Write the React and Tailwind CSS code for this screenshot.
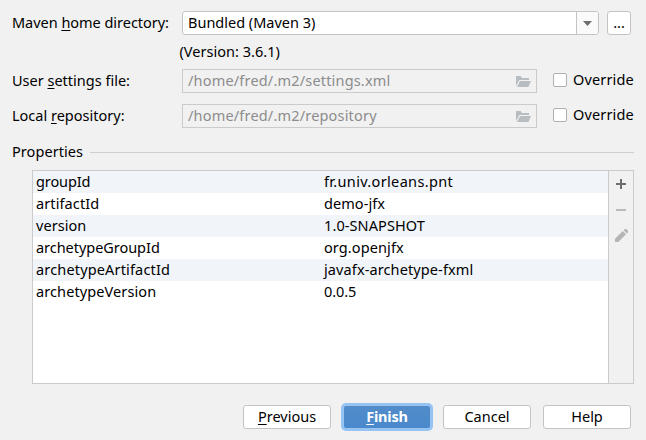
function FolderIcon() {
  return (
    <svg width="15" height="12" viewBox="0 0 15 12" fill="#b7bdc1" className="mr-[5px] shrink-0">
      <path d="M0 11V1h4.6L6 3h7v2H3.4L0 11z" />
      <path d="M4 6h11l-2.6 6H1z" />
    </svg>
  );
}

function PathField({ children }) {
  return (
    <div className="flex h-6 w-[355px] items-center justify-between border border-[#cbcbcb] pl-[5px] text-[#8c8c8c]">
      <span className="pb-px tracking-[0.18px]">{children}</span>
      <FolderIcon />
    </div>
  );
}

function Override() {
  return (
    <label className="ml-4 flex items-center pb-0.5">
      <span className="mr-[6px] h-[14px] w-[14px] rounded-[2px] border border-[#b0b0b0] bg-white" />
      <span className="pb-px tracking-[0.15px]">Override</span>
    </label>
  );
}

function Key({ children }) {
  return (
    <span className="underline decoration-1 underline-offset-2 [text-decoration-skip-ink:none]">
      {children}
    </span>
  );
}

function DialogButton({ children }) {
  return (
    <button className="flex h-6 w-[88px] items-center justify-center rounded-[3px] border border-[#c4c4c4] bg-white pb-px">
      {children}
    </button>
  );
}

const properties = [
  { name: "groupId", value: "fr.univ.orleans.pnt", nameClass: "tracking-[-0.1px]", valueClass: "tracking-[0.34px]" },
  { name: "artifactId", value: "demo-jfx", nameClass: "tracking-[0.1px]", valueClass: "tracking-[0.06px]" },
  { name: "version", value: "1.0-SNAPSHOT", nameClass: "tracking-[0.05px]", valueClass: "tracking-[0.1px]" },
  { name: "archetypeGroupId", value: "org.openjfx", nameClass: "tracking-[-0.04px]", valueClass: "tracking-[0.1px]" },
  { name: "archetypeArtifactId", value: "javafx-archetype-fxml", nameClass: "tracking-[0.16px]", valueClass: "tracking-[0.11px]" },
  { name: "archetypeVersion", value: "0.0.5", nameClass: "tracking-[0.1px]", valueClass: "tracking-[-0.1px]" },
];

export default function App() {
  return (
    <div className="flex h-[440px] w-[646px] flex-col overflow-hidden whitespace-nowrap bg-[#f1f1f1] pl-3 pt-[11px] font-['Noto_Sans',sans-serif] text-[14.5px] leading-[15px] text-black">
      <div className="flex h-6 items-center">
        <div className="w-[170px] pb-px tracking-[-0.03px]">
          <span>Maven <Key>h</Key>ome directory:</span>
        </div>
        <div className="flex h-6 w-[417px] rounded-[3px] border border-[#c4c4c4] bg-white">
          <div className="flex flex-1 items-center pb-px pl-[5px]"><span>Bundled (Maven 3)</span></div>
          <div className="flex w-[22px] items-center justify-center rounded-r-[2px] border-l border-[#c4c4c4] bg-[#fafafa]">
            <svg width="9" height="5" viewBox="0 0 9 5" fill="#6e6e6e"><path d="M0 0h9L4.5 5z" /></svg>
          </div>
        </div>
        <button className="ml-2 flex h-6 w-6 items-center justify-center rounded-[3px] border border-[#c4c4c4] bg-white pb-px"><span>...</span></button>
      </div>

      <div className="mt-[9px] h-[15px] pl-[167.5px] tracking-[0.02px]"><span>(Version: 3.6.1)</span></div>

      <div className="mt-[10px] flex h-6 items-center">
        <div className="w-[170px] pb-px"><span>User <Key>s</Key>ettings file:</span></div>
        <PathField>/home/fred/.m2/settings.xml</PathField>
        <Override />
      </div>

      <div className="mt-[11px] flex h-6 items-center">
        <div className="w-[170px] pb-px"><span>Local <Key>r</Key>epository:</span></div>
        <PathField>/home/fred/.m2/repository</PathField>
        <Override />
      </div>

      <div className="mt-4 flex h-[17px] items-center">
        <div className="w-[78px] pb-0.5 tracking-[0.07px]"><span>Properties</span></div>
        <div className="h-px w-[544px] bg-[#cfcfcf]" />
      </div>

      <div className="ml-5 mt-[9px] flex h-[214px] w-[602px] border border-[#cbcbcb]">
        <div className="flex-1 bg-white">
          {properties.map(({ name, value, nameClass, valueClass }) => (
            <div key={name} className="flex h-[22px] items-center pb-px pl-[3px] odd:bg-[#f1f5fa]">
              <div className="w-[288px]"><span className={nameClass}>{name}</span></div>
              <span className={valueClass}>{value}</span>
            </div>
          ))}
        </div>
        <div className="flex w-[25px] flex-col items-center border-l border-[#cbcbcb] pt-2">
          <svg width="10" height="10" viewBox="0 0 10 10" fill="#6e6e6e"><path d="M4 0h2v4h4v2H6v4H4V6H0V4h4z" /></svg>
          <div className="mt-5 h-[2px] w-[10px] bg-[#b9b9b9]" />
          <svg width="13" height="13" viewBox="0 0 13 13" fill="#b5b5b5" className="mt-[18px]">
            <path d="M0 13v-3.3L7.8 2l3.2 3.2L3.3 13zM8.6 1.2 9.8 0h1.4L13 1.8v1.4l-1.2 1.2z" />
          </svg>
        </div>
      </div>

      <div className="mt-[19px] flex h-7 items-center pl-[231px]">
        <DialogButton><span><Key>P</Key>revious</span></DialogButton>
        <button className="ml-[10px] flex h-7 w-[92px] items-center justify-center rounded-[5px] border-[3px] border-[#97c3f3] bg-linear-to-b from-[#528cc9] to-[#4989cc] pb-px font-bold tracking-[-0.2px] text-white">
          <span><Key>F</Key>inish</span>
        </button>
        <div className="ml-[10px] flex gap-3">
          <DialogButton><span>Cancel</span></DialogButton>
          <DialogButton><span>Help</span></DialogButton>
        </div>
      </div>
    </div>
  );
}
